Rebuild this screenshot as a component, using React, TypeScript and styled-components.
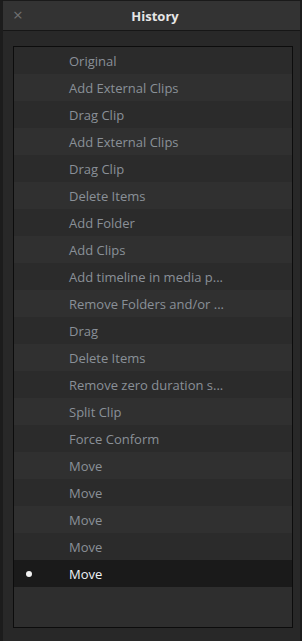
import React from 'react';
import styled, { createGlobalStyle } from 'styled-components';

const items = [
  'Original',
  'Add External Clips',
  'Drag Clip',
  'Add External Clips',
  'Drag Clip',
  'Delete Items',
  'Add Folder',
  'Add Clips',
  'Add timeline in media p...',
  'Remove Folders and/or ...',
  'Drag',
  'Delete Items',
  'Remove zero duration s...',
  'Split Clip',
  'Force Conform',
  'Move',
  'Move',
  'Move',
  'Move',
  'Move',
];

const GlobalStyle = createGlobalStyle`
  html, body {
    margin: 0;
    padding: 0;
    background: #1c1c1c;
    font-family: "Open Sans", "Liberation Sans", sans-serif;
  }
`;

const App = () => {
  const current = items.length - 1;
  return (
    <>
      <GlobalStyle />
      <Window>
        <TitleBar>
          <CloseButton>×</CloseButton>
          <Title>History</Title>
        </TitleBar>
        <Body>
          <List>
            {items.map((label, i) => (
              <Row key={i} odd={i % 2 === 1} active={i === current}>
                <Marker>{i === current && <Dot />}</Marker>
                <Label active={i === current}>{label}</Label>
              </Row>
            ))}
          </List>
        </Body>
      </Window>
    </>
  );
};
export default App;

const Window = styled.div`
  width: 302px;
  height: 641px;
  box-sizing: border-box;
  border-top: 1px solid #1a1a1a;
  border-left: 3px solid #1c1c1c;
  border-right: 2px solid #1c1c1c;
  display: flex;
  flex-direction: column;
  background: #282828;
`;

const TitleBar = styled.div`
  height: 29px;
  flex-shrink: 0;
  position: relative;
  display: flex;
  align-items: center;
  justify-content: center;
  background: #333333;
  border-bottom: 1px solid #161616;
`;

const CloseButton = styled.span`
  position: absolute;
  left: 10px;
  top: 4px;
  font-size: 17px;
  color: #707070;
  line-height: 20px;
`;

const Title = styled.div`
  font-size: 13px;
  font-weight: 700;
  color: #e6e6e6;
  margin-left: 7px;
`;

const Body = styled.div`
  flex: 1;
  padding: 15px 7px 15px 10px;
  display: flex;
`;

const List = styled.div`
  flex: 1;
  height: 580px;
  border: 1px solid #0c0c0c;
  background: #2e2e2e;
  display: flex;
  flex-direction: column;
`;

const Row = styled.div<{ odd: boolean; active: boolean }>`
  height: 27px;
  display: flex;
  align-items: center;
  background: ${(p) => (p.active ? '#1a1a1a' : p.odd ? '#303030' : '#2b2b2b')};
`;

const Marker = styled.div`
  width: 55px;
  display: flex;
  align-items: center;
  padding-left: 12px;
  box-sizing: border-box;
`;

const Dot = styled.span`
  width: 6px;
  height: 6px;
  border-radius: 50%;
  background: #f2f2f2;
`;

const Label = styled.span<{ active: boolean }>`
  font-size: 13px;
  color: ${(p) => (p.active ? '#eef2f6' : '#8a9098')};
  white-space: nowrap;
`;
